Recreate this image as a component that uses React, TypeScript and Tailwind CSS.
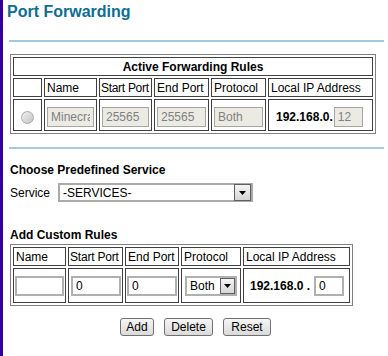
import React from 'react';

const cell = 'border border-[#404040]';
const head = 'border border-[#404040] flex h-[19px] items-center whitespace-nowrap pl-[2px]';
const disabledInput =
  'w-full h-[20px] border border-[#a5a5a5] bg-[#ebebe4] px-[3px] text-[12px] text-[#808080] outline-none';
const customInput =
  'w-full h-[20px] border-2 border-[#b0b0b0] bg-white px-[3px] text-[12px] text-black outline-none';

function DropArrow({ className }: { className: string }) {
  return (
    <div className={`flex shrink-0 items-center justify-center border border-[#5f5f5f] bg-gradient-to-b from-[#f4f4f4] to-[#d6d6d6] ${className}`}>
      <svg width="7" height="4" viewBox="0 0 7 4">
        <polygon points="0,0 7,0 3.5,4" fill="#000" />
      </svg>
    </div>
  );
}

function Button({ label, width }: { label: string; width: string }) {
  return (
    <button
      className={`h-[18px] ${width} rounded-[3px] border border-[#707070] bg-gradient-to-b from-[#f6f6f6] to-[#dadada] text-[12px] leading-[14px] text-black`}
    >
      {label}
    </button>
  );
}

export default function App() {
  return (
    <div className="flex h-[356px] w-[388px] overflow-hidden bg-white font-['Liberation_Sans',Arial,sans-serif] text-[12px] leading-[14px] text-black">
      {/* left frame edge */}
      <div className="w-[3px] shrink-0 bg-[#34009a]" />

      <div className="flex flex-1 flex-col">
        <h1 className="pl-[4px] pt-[2px] text-[16px] font-bold leading-[19px] text-[#0e6d92]">Port Forwarding</h1>
        <div className="ml-[6px] mr-[4px] mt-[19px] h-[2px] bg-[#a6c9e2]" />

        {/* Active rules */}
        <div className="ml-[7px] mt-[12px] grid w-[366px] grid-cols-[29px_53px_53px_55px_55px_105px] gap-[2px] border border-[#808080] p-[2px]">
          <div className={`${cell} col-span-6 flex h-[19px] items-center justify-center font-bold`}>Active Forwarding Rules</div>
          <div className={`${cell} h-[19px]`} />
          <div className={head}>Name</div>
          <div className={`${head} !pl-[1px] tracking-[-0.3px]`}>Start Port</div>
          <div className={head}>End Port</div>
          <div className={head}>Protocol</div>
          <div className={head}>Local IP Address</div>

          <div className={`${cell} flex h-[32px] items-center justify-center pt-[4px]`}>
            <div className="h-[13px] w-[13px] rounded-full border border-[#a9a9a9] bg-gradient-to-br from-[#f0f0f0] to-[#c4c4c4]" />
          </div>
          <div className={`${cell} h-[32px] px-[2px] pt-[7px]`}>
            <input disabled value="Minecraft" readOnly className={disabledInput} />
          </div>
          <div className={`${cell} h-[32px] px-[2px] pt-[7px]`}>
            <input disabled value="25565" readOnly className={disabledInput} />
          </div>
          <div className={`${cell} h-[32px] px-[2px] pt-[7px]`}>
            <input disabled value="25565" readOnly className={disabledInput} />
          </div>
          <div className={`${cell} h-[32px] px-[2px] pt-[7px]`}>
            <input disabled value="Both" readOnly className={disabledInput} />
          </div>
          <div className={`${cell} flex h-[32px] items-start pl-[7px] pt-[7px]`}>
            <span className="mt-[3px] font-bold">192.168.0.</span>
            <input disabled value="12" readOnly className={`${disabledInput} ml-[1px] !w-[29px]`} />
          </div>
        </div>

        <div className="ml-[6px] mr-[4px] mt-[13px] h-[2px] bg-[#a6c9e2]" />

        <h2 className="ml-[7px] mt-[14px] font-bold">Choose Predefined Service</h2>
        <div className="ml-[7px] mt-[6px] flex items-center">
          <span className="w-[48px]">Service</span>
          <div className="flex h-[19px] w-[195px] items-center border-2 border-[#aaaaaa] bg-white">
            <span className="flex-1 pl-[3px]">-SERVICES-</span>
            <DropArrow className="h-[17px] w-[17px]" />
          </div>
        </div>

        <h2 className="ml-[7px] mt-[26px] font-bold">Add Custom Rules</h2>

        {/* Custom rules */}
        <div className="ml-[7px] mt-[2px] grid w-[343px] grid-cols-[53px_55px_54px_60px_107px] gap-[2px] border border-[#808080] p-[2px]">
          <div className={head}>Name</div>
          <div className={`${head} !pl-[1px] tracking-[-0.2px]`}>Start Port</div>
          <div className={head}>End Port</div>
          <div className={head}>Protocol</div>
          <div className={head}>Local IP Address</div>

          <div className={`${cell} flex h-[35px] items-center px-[1px]`}>
            <input value="" readOnly className={customInput} />
          </div>
          <div className={`${cell} flex h-[35px] items-center pl-[2px] pr-[1px]`}>
            <input value="0" readOnly className={customInput} />
          </div>
          <div className={`${cell} flex h-[35px] items-center pl-[1px] pr-[1px]`}>
            <input value="0" readOnly className={customInput} />
          </div>
          <div className={`${cell} flex h-[35px] items-center pl-[3px]`}>
            <div className="flex h-[20px] w-[52px] items-center border-2 border-[#b0b0b0] bg-white">
              <span className="flex-1 pl-[3px] text-[12px]">Both</span>
              <DropArrow className="h-[16px] w-[15px]" />
            </div>
          </div>
          <div className={`${cell} flex h-[35px] items-center pl-[6px]`}>
            <span className="font-bold">192.168.0 .</span>
            <input value="0" readOnly className={`${customInput} ml-[4px] !w-[30px]`} />
          </div>
        </div>

        <div className="mt-[12px] flex justify-center gap-[10px]">
          <Button label="Add" width="w-[34px]" />
          <Button label="Delete" width="w-[49px]" />
          <Button label="Reset" width="w-[48px]" />
        </div>
      </div>
    </div>
  );
}
